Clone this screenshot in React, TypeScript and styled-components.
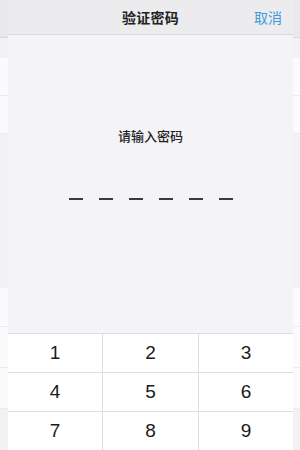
import React from "react";
import styled, { createGlobalStyle } from "styled-components";

const Global = createGlobalStyle`
  html, body { margin: 0; padding: 0; }
  body {
    width: 300px; height: 450px; overflow: hidden;
    background: #f2f2f4;
    font-family: "Noto Sans CJK SC", "Liberation Sans", sans-serif;
  }
`;

const Stage = styled.div`
  position: relative;
  width: 300px;
  height: 450px;
  overflow: hidden;
`;

const BackPage = styled.div`
  display: flex;
  flex-direction: column;
  height: 100%;
  background: #f2f2f4;
`;

const BackHeader = styled.div`
  height: 37px;
  background: #e9e9eb;
  border-bottom: 1px solid #d9d9db;
  flex-shrink: 0;
`;

const BackRow = styled.div<{ $top?: number; $h: number }>`
  margin-top: ${(p) => p.$top ?? 0}px;
  height: ${(p) => p.$h}px;
  background: #fbfbfd;
  border-bottom: 1px solid #ececee;
  flex-shrink: 0;
`;

const Sheet = styled.div`
  position: absolute;
  top: 0;
  left: 8px;
  width: 285px;
  height: 450px;
  display: flex;
  flex-direction: column;
  background: #f4f3f6;
`;

const Header = styled.div`
  height: 34px;
  flex-shrink: 0;
  background: #ececee;
  border-bottom: 1px solid #dcdcde;
  display: flex;
  align-items: center;
  justify-content: center;
  position: relative;
`;

const Title = styled.div`
  font-size: 14px;
  font-weight: 700;
  color: #222;
  letter-spacing: 0.3px;
`;

const Cancel = styled.div`
  position: absolute;
  right: 11px;
  top: 0;
  height: 34px;
  display: flex;
  align-items: center;
  font-size: 14px;
  color: #3d9bd9;
`;

const Body = styled.div`
  flex: 1;
  display: flex;
  flex-direction: column;
  align-items: center;
  padding-top: 92px;
`;

const Prompt = styled.div`
  font-size: 13px;
  line-height: 18px;
  font-weight: 500;
  color: #222;
`;

const Dashes = styled.div`
  margin-top: 53px;
  display: flex;
  gap: 16px;
  margin-left: 1px;
`;

const Dash = styled.div`
  width: 14px;
  height: 2px;
  background: #3a3a3a;
`;

const Keypad = styled.div`
  display: grid;
  grid-template-columns: 95px 96px 94px;
  background: #fff;
  flex-shrink: 0;
`;

const Key = styled.div<{ $last: boolean }>`
  height: 38px;
  border-top: 1px solid #dedede;
  border-right: ${(p) => (p.$last ? "none" : "1px solid #dedede")};
  display: flex;
  align-items: center;
  justify-content: center;
  font-family: "Liberation Sans", "Noto Sans", sans-serif;
  font-size: 19px;
  color: #1a1a1a;
`;

export default function App() {
  const keys = ["1", "2", "3", "4", "5", "6", "7", "8", "9"];
  return (
    <Stage>
      <Global />
      <BackPage>
        <BackHeader />
        <BackRow $top={20} $h={37} />
        <BackRow $h={37} />
        <BackRow $top={154} $h={38} />
        <BackRow $h={40} />
        <BackRow $h={40} />
      </BackPage>
      <Sheet>
        <Header>
          <Title>验证密码</Title>
          <Cancel>取消</Cancel>
        </Header>
        <Body>
          <Prompt>请输入密码</Prompt>
          <Dashes>
            {Array.from({ length: 6 }).map((_, i) => (
              <Dash key={i} />
            ))}
          </Dashes>
        </Body>
        <Keypad>
          {keys.map((k, i) => (
            <Key key={k} $last={i % 3 === 2}>
              {k}
            </Key>
          ))}
        </Keypad>
      </Sheet>
    </Stage>
  );
}
